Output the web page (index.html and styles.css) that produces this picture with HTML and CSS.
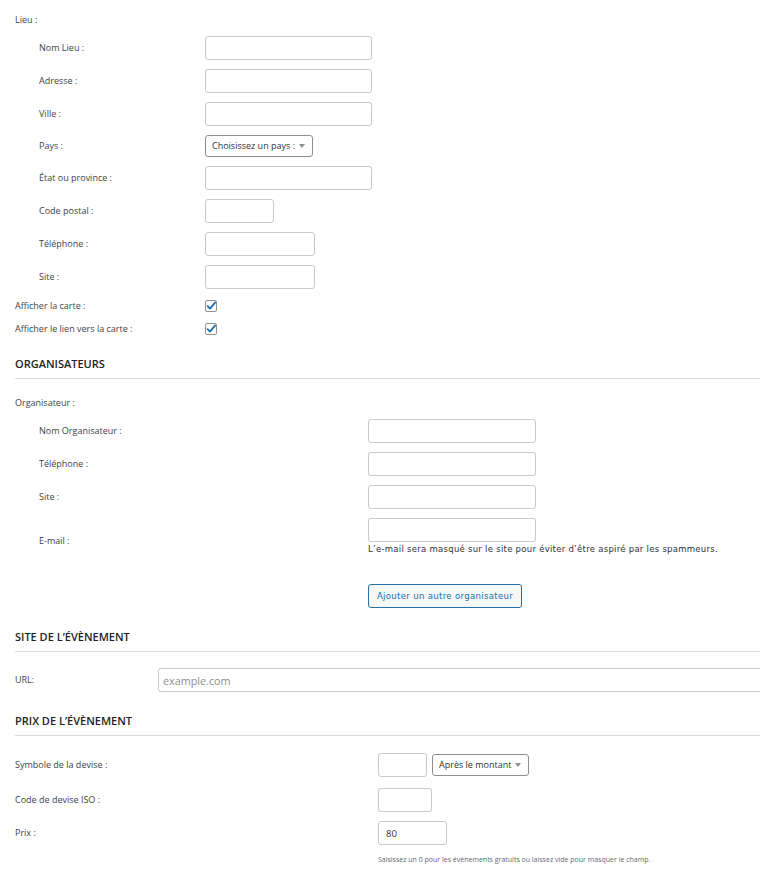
FILE: index.html
```html
<!DOCTYPE html>
<html lang="fr">
<head>
<meta charset="utf-8">
<title>Évènement</title>
<link rel="stylesheet" href="styles.css">
</head>
<body>
<div class="page">
  <section class="block lieu">
    <div class="group-label">Lieu :</div>
    <div class="row first"><label class="lbl sub">Nom Lieu :</label><input class="txt w-167" type="text"></div>
    <div class="row"><label class="lbl sub">Adresse :</label><input class="txt w-167" type="text"></div>
    <div class="row"><label class="lbl sub">Ville :</label><input class="txt w-167" type="text"></div>
    <div class="row"><span class="lbl sub">Pays :</span>
      <div class="select w-108"><span class="sel-text">Choisissez un pays :</span><svg class="caret" width="6" height="4" viewBox="0 0 6 4"><path d="M0 0H6L3 4Z"/></svg></div>
    </div>
    <div class="row"><label class="lbl sub">État ou province :</label><input class="txt w-167" type="text"></div>
    <div class="row"><label class="lbl sub">Code postal :</label><input class="txt w-69" type="text"></div>
    <div class="row"><label class="lbl sub">Téléphone :</label><input class="txt w-110" type="text"></div>
    <div class="row"><label class="lbl sub">Site :</label><input class="txt w-110" type="text"></div>
    <div class="row chk-row"><span class="lbl">Afficher la carte :</span>
      <span class="check"><svg width="12" height="12" viewBox="0 0 12 12"><path d="M2.6 6.2 5 8.6 10.2 2.4"/></svg></span>
    </div>
    <div class="row chk-row second"><span class="lbl">Afficher le lien vers la carte :</span>
      <span class="check"><svg width="12" height="12" viewBox="0 0 12 12"><path d="M2.6 6.2 5 8.6 10.2 2.4"/></svg></span>
    </div>
  </section>

  <h2 class="sec-title first-title">ORGANISATEURS</h2>
  <section class="block org">
    <div class="group-label">Organisateur :</div>
    <div class="row first"><label class="lbl sub">Nom Organisateur :</label><input class="txt w-168" type="text"></div>
    <div class="row"><label class="lbl sub">Téléphone :</label><input class="txt w-168" type="text"></div>
    <div class="row"><label class="lbl sub">Site :</label><input class="txt w-168" type="text"></div>
    <div class="row"><label class="lbl sub email-lbl">E-mail :</label>
      <div class="field-col">
        <input class="txt w-168" type="text">
        <p class="email-help">L’e-mail sera masqué sur le site pour éviter d’être aspiré par les spammeurs.</p>
      </div>
    </div>
    <div class="btn-row"><button class="btn" type="button">Ajouter un autre organisateur</button></div>
  </section>

  <h2 class="sec-title">SITE DE L’ÉVÈNEMENT</h2>
  <section class="block site">
    <div class="row first"><label class="lbl">URL:</label><input class="txt url" type="text" placeholder="example.com"></div>
  </section>

  <h2 class="sec-title">PRIX DE L’ÉVÈNEMENT</h2>
  <section class="block prix">
    <div class="row first"><label class="lbl">Symbole de la devise :</label>
      <div class="inline-fields">
        <input class="txt w-49" type="text">
        <div class="select w-97"><span class="sel-text">Après le montant</span><svg class="caret" width="6" height="4" viewBox="0 0 6 4"><path d="M0 0H6L3 4Z"/></svg></div>
      </div>
    </div>
    <div class="row gap-lg"><label class="lbl">Code de devise ISO :</label><input class="txt w-54" type="text"></div>
    <div class="row top"><label class="lbl">Prix :</label>
      <div class="field-col">
        <input class="txt w-69 val" type="text" value="80">
        <p class="price-help">Saisissez un 0 pour les évènements gratuits ou laissez vide pour masquer le champ.</p>
      </div>
    </div>
  </section>
</div>
</body>
</html>
```

FILE: styles.css
```css
html, body {
  margin: 0;
  padding: 0;
  background: #ffffff;
  overflow: hidden;
}

.page {
  padding: 12px 0 0 15px;
  font-family: "Open Sans", "Noto Sans", sans-serif;
  font-size: 9px;
  color: #3c434a;
  overflow: hidden;
  height: 876px;
  box-sizing: border-box;
}

.group-label {
  line-height: 16px;
  height: 16px;
}

.row {
  display: flex;
  align-items: center;
  margin-top: 9px;
}

.row.first {
  margin-top: 8px;
}

.lbl {
  flex: none;
  line-height: 16px;
  box-sizing: border-box;
  font-size: 9px;
}

.lbl.sub {
  padding-left: 24px;
}

.lieu .lbl { width: 190px; }
.org .lbl { width: 353px; }
.site .lbl { width: 143px; }
.prix .lbl { width: 363px; }

.txt {
  flex: none;
  box-sizing: border-box;
  height: 24px;
  border: 1px solid #c8c9cc;
  border-radius: 3px;
  background: #fff;
  margin: 0;
  padding: 0 7px;
  font-family: "Open Sans", "Noto Sans", sans-serif;
  font-size: 9.6px;
  color: #2c3338;
  outline: none;
}

.w-167 { width: 167px; }
.w-168 { width: 168px; }
.w-110 { width: 110px; }
.w-69 { width: 69px; }
.w-54 { width: 54px; }
.w-49 { width: 49px; }

.txt.url {
  width: 640px;
  padding-left: 4px;
  font-size: 10.8px;
}

.txt.url::placeholder {
  color: #8c8f94;
}

.select {
  flex: none;
  box-sizing: border-box;
  height: 22px;
  border: 1px solid #8c8f94;
  border-radius: 3px;
  display: flex;
  align-items: center;
  justify-content: space-between;
  padding: 0 7px 0 6px;
  font-size: 9px;
  color: #2c3338;
  background: #fff;
}

.w-108 { width: 108px; }
.w-97 { width: 97px; }

.sel-text {
  white-space: nowrap;
  line-height: 20px;
}

.caret {
  flex: none;
  fill: #8c8f94;
}

.chk-row {
  height: 16px;
  margin-top: 9px;
}

.chk-row.second {
  margin-top: 7px;
}

.check {
  flex: none;
  box-sizing: border-box;
  width: 12px;
  height: 12px;
  border: 1px solid #8c8f94;
  border-radius: 2px;
  display: flex;
  align-items: center;
  justify-content: center;
  overflow: visible;
}

.check svg {
  flex: none;
  overflow: visible;
}

.check path {
  fill: none;
  stroke: #2271b1;
  stroke-width: 1.9;
  stroke-linecap: round;
  stroke-linejoin: round;
}

.sec-title {
  margin: 21px 0 0 0;
  font-size: 11px;
  font-weight: 600;
  line-height: 16px;
  color: #1d2327;
  padding-bottom: 6px;
  border-bottom: 1px solid #dcdcde;
}

.sec-title.first-title {
  margin-top: 19px;
}

.org .group-label {
  margin-top: 16px;
}

.site .row.first {
  margin-top: 16px;
}

.prix .row.first {
  margin-top: 17px;
}

.field-col {
  display: flex;
  flex-direction: column;
  align-items: flex-start;
}

.email-lbl {
  padding-top: 8px;
}

.email-help {
  margin: 0;
  font-family: "DejaVu Sans", Verdana, sans-serif;
  font-size: 8.5px;
  letter-spacing: 0.27px;
  line-height: 14px;
  color: #2c3338;
  white-space: nowrap;
}

.btn-row {
  margin-top: 28px;
  padding-left: 353px;
}

.btn {
  box-sizing: border-box;
  height: 24px;
  width: 154px;
  padding: 0;
  border: 1px solid #2271b1;
  border-radius: 3px;
  background: #f6f7f7;
  color: #2271b1;
  font-family: "DejaVu Sans", Verdana, sans-serif;
  font-size: 8.6px;
  letter-spacing: 0.3px;
  line-height: 22px;
}

.inline-fields {
  display: flex;
  align-items: center;
  gap: 5px;
}

.row.gap-lg {
  margin-top: 11px;
}

.row.top {
  align-items: flex-start;
}

.row.top .lbl {
  line-height: 24px;
}

.price-help {
  margin: 9px 0 0 0;
  font-size: 7px;
  line-height: 12px;
  color: #646970;
  white-space: nowrap;
}
```
